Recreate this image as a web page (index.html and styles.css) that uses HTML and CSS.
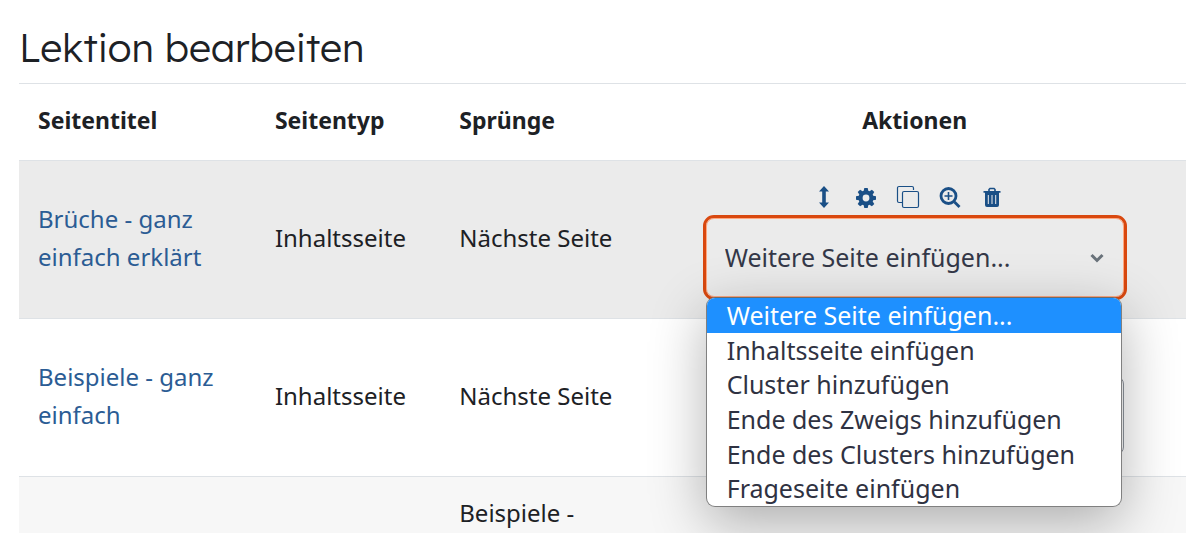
FILE: index.html
```html
<!DOCTYPE html>
<html lang="de">
<head>
<meta charset="UTF-8" />
<meta name="viewport" content="width=device-width, initial-scale=1" />
<title>Lektion bearbeiten</title>
<link rel="stylesheet" href="styles.css">
</head>
<body>

<!-- Icon set for the row actions -->
<svg class="sprite" aria-hidden="true">
  <symbol id="icon-move" viewBox="0 0 24 24">
    <path d="M12 1l5 5.500h-3.200v11H17L12 23l-5-5.500h3.200v-11H7z"/>
  </symbol>
  <symbol id="icon-settings" viewBox="0 0 24 24">
    <path fill-rule="evenodd" d="M10.300 3h3.400l.6 2.800 1.200.5 2.400-1.600 2.400 2.400-1.600 2.400.5 1.200 2.800.6v3.400l-2.800.6-.5 1.200 1.600 2.400-2.400 2.400-2.400-1.600-1.200.5-.6 2.800h-3.400l-.6-2.800-1.200-.5-2.400 1.600-2.400-2.400 1.600-2.400-.5-1.200-2.800-.6v-3.400l2.800-.6.5-1.200-1.600-2.400 2.400-2.400 2.400 1.600 1.200-.5zM12 9.600a3.400 3.400 0 1 0 0 6.800 3.400 3.400 0 0 0 0-6.800z"/>
  </symbol>
  <symbol id="icon-copy" viewBox="0 0 24 24">
    <path class="stroke" d="M6 17.500H3a1.500 1.500 0 0 1-1.500-1.500V3A1.500 1.500 0 0 1 3 1.500h13A1.500 1.500 0 0 1 17.500 3v2"/>
    <rect class="stroke" x="6.500" y="6.500" width="16" height="16" rx="1.500"/>
  </symbol>
  <symbol id="icon-preview" viewBox="0 0 24 24">
    <circle class="stroke thick" cx="10.500" cy="11" r="7.500"/>
    <path class="stroke thick" d="M16.500 17l5 5"/>
    <path class="stroke mid" d="M10.500 7v8M6.500 11h8"/>
  </symbol>
  <symbol id="icon-delete" viewBox="0 0 24 24">
    <path class="stroke mid" d="M9 6V4.500L10 3.500h4l1 1V6"/>
    <path fill-rule="evenodd" d="M3.500 6h17v1.800H19V20a2 2 0 0 1-2 2H7a2 2 0 0 1-2-2V7.800H3.500zM7.800 10v9h1v-9zM11.500 10v9h1v-9zM15.200 10v9h1v-9z"/>
  </symbol>
</svg>

<main>
  <h1>Lektion bearbeiten</h1>
  <table aria-label="Lektion bearbeiten">
    <colgroup>
      <col class="col-title"><col class="col-type"><col class="col-jump"><col class="col-actions">
    </colgroup>
    <thead>
      <tr>
        <th>Seitentitel</th>
        <th>Seitentyp</th>
        <th>Sprünge</th>
        <th class="center">Aktionen</th>
      </tr>
    </thead>
    <tbody>
      <tr class="row-active">
        <td><a href="#">Brüche - ganz einfach erklärt</a></td>
        <td>Inhaltsseite</td>
        <td>Nächste Seite</td>
        <td>
          <div class="actions">
            <a href="#" aria-label="Verschieben"><svg><use href="#icon-move"/></svg></a>
            <a href="#" aria-label="Bearbeiten"><svg><use href="#icon-settings"/></svg></a>
            <a href="#" aria-label="Duplizieren"><svg><use href="#icon-copy"/></svg></a>
            <a href="#" aria-label="Vorschau"><svg><use href="#icon-preview"/></svg></a>
            <a href="#" aria-label="Löschen"><svg><use href="#icon-delete"/></svg></a>
          </div>
          <div class="add-page open">
            <select aria-label="Weitere Seite einfügen">
              <option>Weitere Seite einfügen...</option>
              <option>Inhaltsseite einfügen</option>
              <option>Cluster hinzufügen</option>
              <option>Ende des Zweigs hinzufügen</option>
              <option>Ende des Clusters hinzufügen</option>
              <option>Frageseite einfügen</option>
            </select>
            <svg class="chevron" viewBox="0 0 16 16" aria-hidden="true"><path d="M2.500 5l5.500 5.500L13.500 5"/></svg>
            <ul class="menu" role="listbox" aria-label="Weitere Seite einfügen">
              <li class="selected" role="option" aria-selected="true">Weitere Seite einfügen...</li>
              <li role="option">Inhaltsseite einfügen</li>
              <li role="option">Cluster hinzufügen</li>
              <li role="option">Ende des Zweigs hinzufügen</li>
              <li role="option">Ende des Clusters hinzufügen</li>
              <li role="option">Frageseite einfügen</li>
            </ul>
          </div>
        </td>
      </tr>
      <tr>
        <td><a href="#">Beispiele - ganz einfach</a></td>
        <td>Inhaltsseite</td>
        <td>Nächste Seite</td>
        <td>
          <div class="actions"></div>
          <div class="add-page">
            <select aria-label="Weitere Seite einfügen">
              <option></option>
            </select>
          </div>
        </td>
      </tr>
      <tr class="row-alt">
        <td></td>
        <td></td>
        <td>Beispiele -</td>
        <td></td>
      </tr>
    </tbody>
  </table>
</main>

</body>
</html>
```

FILE: styles.css
```css
* { box-sizing: border-box; }
body { margin: 0; background: #fff; color: #1d2125; font-family: "Noto Sans", "Open Sans", sans-serif; font-size: 24px; line-height: 38px; }
main { padding: 24px 14px 0 19px; }
h1 { margin: 0 0 11px; font-family: Lexend, Inter, sans-serif; font-size: 39px; font-weight: 300; line-height: 48px; }
a { color: #2b5c94; text-decoration: none; }
a:hover { text-decoration: underline; }
.sprite { display: none; }

table { width: 100%; table-layout: fixed; border-collapse: separate; border-spacing: 0; }
.col-title { width: 20.3%; }
.col-type { width: 15.8%; }
.col-jump { width: 17.4%; }
th, td { padding: 17px 19px 21px; border-top: 1px solid #dee2e6; text-align: left; vertical-align: middle; }
th { font-size: 23px; font-weight: 700; }
th.center { text-align: center; }
.row-active { background: #ebebeb; }
.row-alt { background: #f7f7f7; }

.actions { display: flex; justify-content: center; align-items: center; gap: 18px; height: 38px; padding-right: 13px; }
.actions a { display: flex; color: #1a4f86; }
.actions svg { width: 24px; height: 24px; fill: currentColor; }
.stroke { fill: none; stroke: currentColor; stroke-width: 1.2; }
.stroke.mid { stroke-width: 1.6; }
.stroke.thick { stroke-width: 2.8; }

.add-page { position: relative; width: 418px; max-width: 100%; margin: 2px auto 0; }
.add-page select { display: block; width: 100%; height: 79px; padding: 0 18px 2px; border: 1px solid #8f959e; border-radius: 8px; background: transparent; color: #343848; font: inherit; font-size: 25px; appearance: none; }
.add-page.open select { border-color: #ffa880; outline: 3px solid #d9480f; }
.chevron { position: absolute; right: 19px; top: 32px; width: 16px; height: 16px; fill: none; stroke: #6a737b; stroke-width: 3; }

.menu { position: absolute; z-index: 10; top: 79px; left: 0; right: 2px; display: grid; grid-auto-rows: 1fr; height: 210px; margin: 0; padding: 0; border: 1px solid #808080; border-top-color: #6b6b6b; border-radius: 9px; background: #fff; color: #2f3242; list-style: none; font-size: 25px; line-height: 34px; overflow: hidden; box-shadow: 0 16px 56px rgba(0,0,0,0.3); }
.menu li { padding: 0 20px; }
.menu .selected { background: #1e90ff; color: #fff; }
```
